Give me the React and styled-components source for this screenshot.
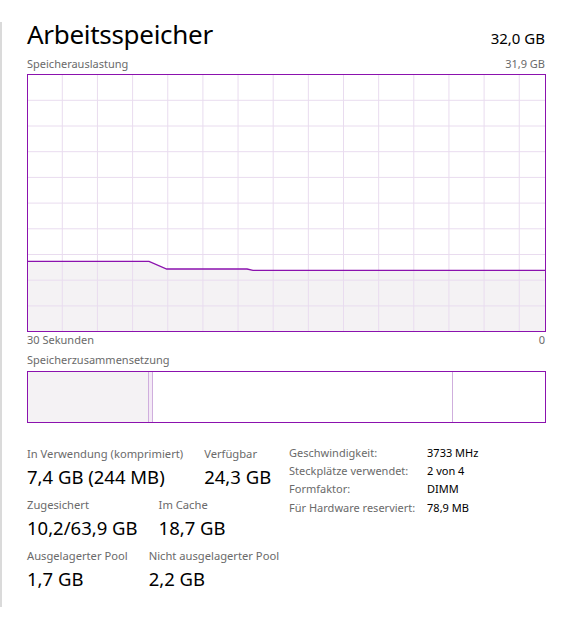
import React from "react";
import styled, { createGlobalStyle } from "styled-components";

const Global = createGlobalStyle`
  html, body { margin: 0; padding: 0; background: #ffffff; }
  body { font-family: "Noto Sans", "Open Sans", sans-serif; color: #000; }
`;

const PURPLE = "#8b12ae";
const GRID = "#e9dcef";
const FILL = "#f4f2f4";

const Panel = styled.div`
  margin-top: 22px;
  height: 585px;
  border-left: 2px solid #dadada;
  padding: 0 20px 0 25px;
  box-sizing: border-box;
  width: 565px;
`;

const Row = styled.div`
  display: flex;
  justify-content: space-between;
  align-items: baseline;
  margin-top: ${(p) => p.$mt || 0}px;
`;

const Title = styled.h1`
  margin: 0;
  font-weight: 400;
  font-size: 26px;
  line-height: 24px;
  letter-spacing: -0.3px;
`;

const Total = styled.div`
  font-size: 15px;
  line-height: 14px;
`;

const Caption = styled.div`
  font-size: 11px;
  line-height: 14px;
  color: #6a6a6a;
  margin-top: ${(p) => p.$mt || 0}px;
`;

const ChartBox = styled.div`
  margin-top: 3px;
  width: 519px;
  height: 258px;
  border: 1px solid ${PURPLE};
  box-sizing: border-box;
`;

const CompBar = styled.div`
  margin-top: 4px;
  width: 519px;
  height: 52px;
  border: 1px solid ${PURPLE};
  box-sizing: border-box;
  display: flex;
`;

const Segment = styled.div`
  flex: ${(p) => (p.$grow ? "1 1 auto" : "0 0 auto")};
  background: ${(p) => p.$bg || "transparent"};
  border-right: ${(p) => (p.$edge ? `1px solid #cfaedd` : "none")};
`;

const Stats = styled.div`
  margin-top: 23px;
  display: flex;
  gap: 10px;
  align-items: flex-start;
`;

const StatGrid = styled.div`
  display: flex;
  flex-direction: column;
  gap: 9px;
`;

const StatRow = styled.div`
  display: flex;
  gap: 21px;
`;

const Stat = styled.div`
  display: flex;
  flex-direction: column;
  gap: 4px;
`;

const Label = styled.div`
  font-size: 11.2px;
  line-height: 16px;
  color: #6a6a6a;
  white-space: nowrap;
`;

const Value = styled.div`
  font-size: 18.5px;
  line-height: 22px;
  white-space: nowrap;
`;

const Details = styled.div`
  margin-top: -2px;
  display: grid;
  grid-template-columns: 138px auto;
  font-size: 11px;
  line-height: 18.2px;
`;

const DKey = styled.div`
  color: #6a6a6a;
  white-space: nowrap;
`;

const DVal = styled.div`
  color: #000;
  white-space: nowrap;
`;

function UsageChart() {
  const w = 517;
  const h = 256;
  const vLines = Array.from({ length: 14 }, (_, k) => 34.3 + 35.15 * k);
  const hLines = Array.from({ length: 9 }, (_, k) => 25.3 + 25.7 * k);
  const pts = [
    [0, 186.3],
    [121, 186.3],
    [138.7, 194],
    [219, 194],
    [225, 195.3],
    [w, 195.3],
  ];
  const line = pts.map((p) => p.join(",")).join(" ");
  const area = `0,${h} ${line} ${w},${h}`;
  return (
    <svg width={w} height={h} viewBox={`0 0 ${w} ${h}`} style={{ display: "block" }}>
      <polygon points={area} fill={FILL} />
      {vLines.map((x) => (
        <line key={"v" + x} x1={x} y1={0} x2={x} y2={h} stroke={GRID} strokeWidth="1" />
      ))}
      {hLines.map((y) => (
        <line key={"h" + y} x1={0} y1={y} x2={w} y2={y} stroke={GRID} strokeWidth="1" />
      ))}
      <polyline points={line} fill="none" stroke={PURPLE} strokeWidth="1.3" />
    </svg>
  );
}

const stats = [
  [
    ["In Verwendung (komprimiert)", "7,4 GB (244 MB)"],
    ["Verfügbar", "24,3 GB"],
  ],
  [
    ["Zugesichert", "10,2/63,9 GB"],
    ["Im Cache", "18,7 GB"],
  ],
  [
    ["Ausgelagerter Pool", "1,7 GB"],
    ["Nicht ausgelagerter Pool", "2,2 GB"],
  ],
];

const details = [
  ["Geschwindigkeit:", "3733 MHz"],
  ["Steckplätze verwendet:", "2 von 4"],
  ["Formfaktor:", "DIMM"],
  ["Für Hardware reserviert:", "78,9 MB"],
];

export default function App() {
  return (
    <>
      <Global />
      <Panel>
        <Row>
          <Title>Arbeitsspeicher</Title>
          <Total>32,0 GB</Total>
        </Row>
        <Row $mt={11}>
          <Caption>Speicherauslastung</Caption>
          <Caption>31,9 GB</Caption>
        </Row>
        <ChartBox>
          <UsageChart />
        </ChartBox>
        <Row $mt={1}>
          <Caption>30 Sekunden</Caption>
          <Caption>0</Caption>
        </Row>
        <Caption $mt={6}>Speicherzusammensetzung</Caption>
        <CompBar>
          <Segment $bg={FILL} $edge style={{ width: 120 }} />
          <Segment $bg="#f4eaf6" $edge style={{ width: 3 }} />
          <Segment $edge style={{ width: 299 }} />
          <Segment $grow />
        </CompBar>
        <Stats>
          <StatGrid>
            {stats.map((row, i) => (
              <StatRow key={i}>
                {row.map(([l, v]) => (
                  <Stat key={l}>
                    <Label>{l}</Label>
                    <Value>{v}</Value>
                  </Stat>
                ))}
              </StatRow>
            ))}
          </StatGrid>
          <Details>
            {details.map(([k, v]) => (
              <React.Fragment key={k}>
                <DKey>{k}</DKey>
                <DVal>{v}</DVal>
              </React.Fragment>
            ))}
          </Details>
        </Stats>
      </Panel>
    </>
  );
}
